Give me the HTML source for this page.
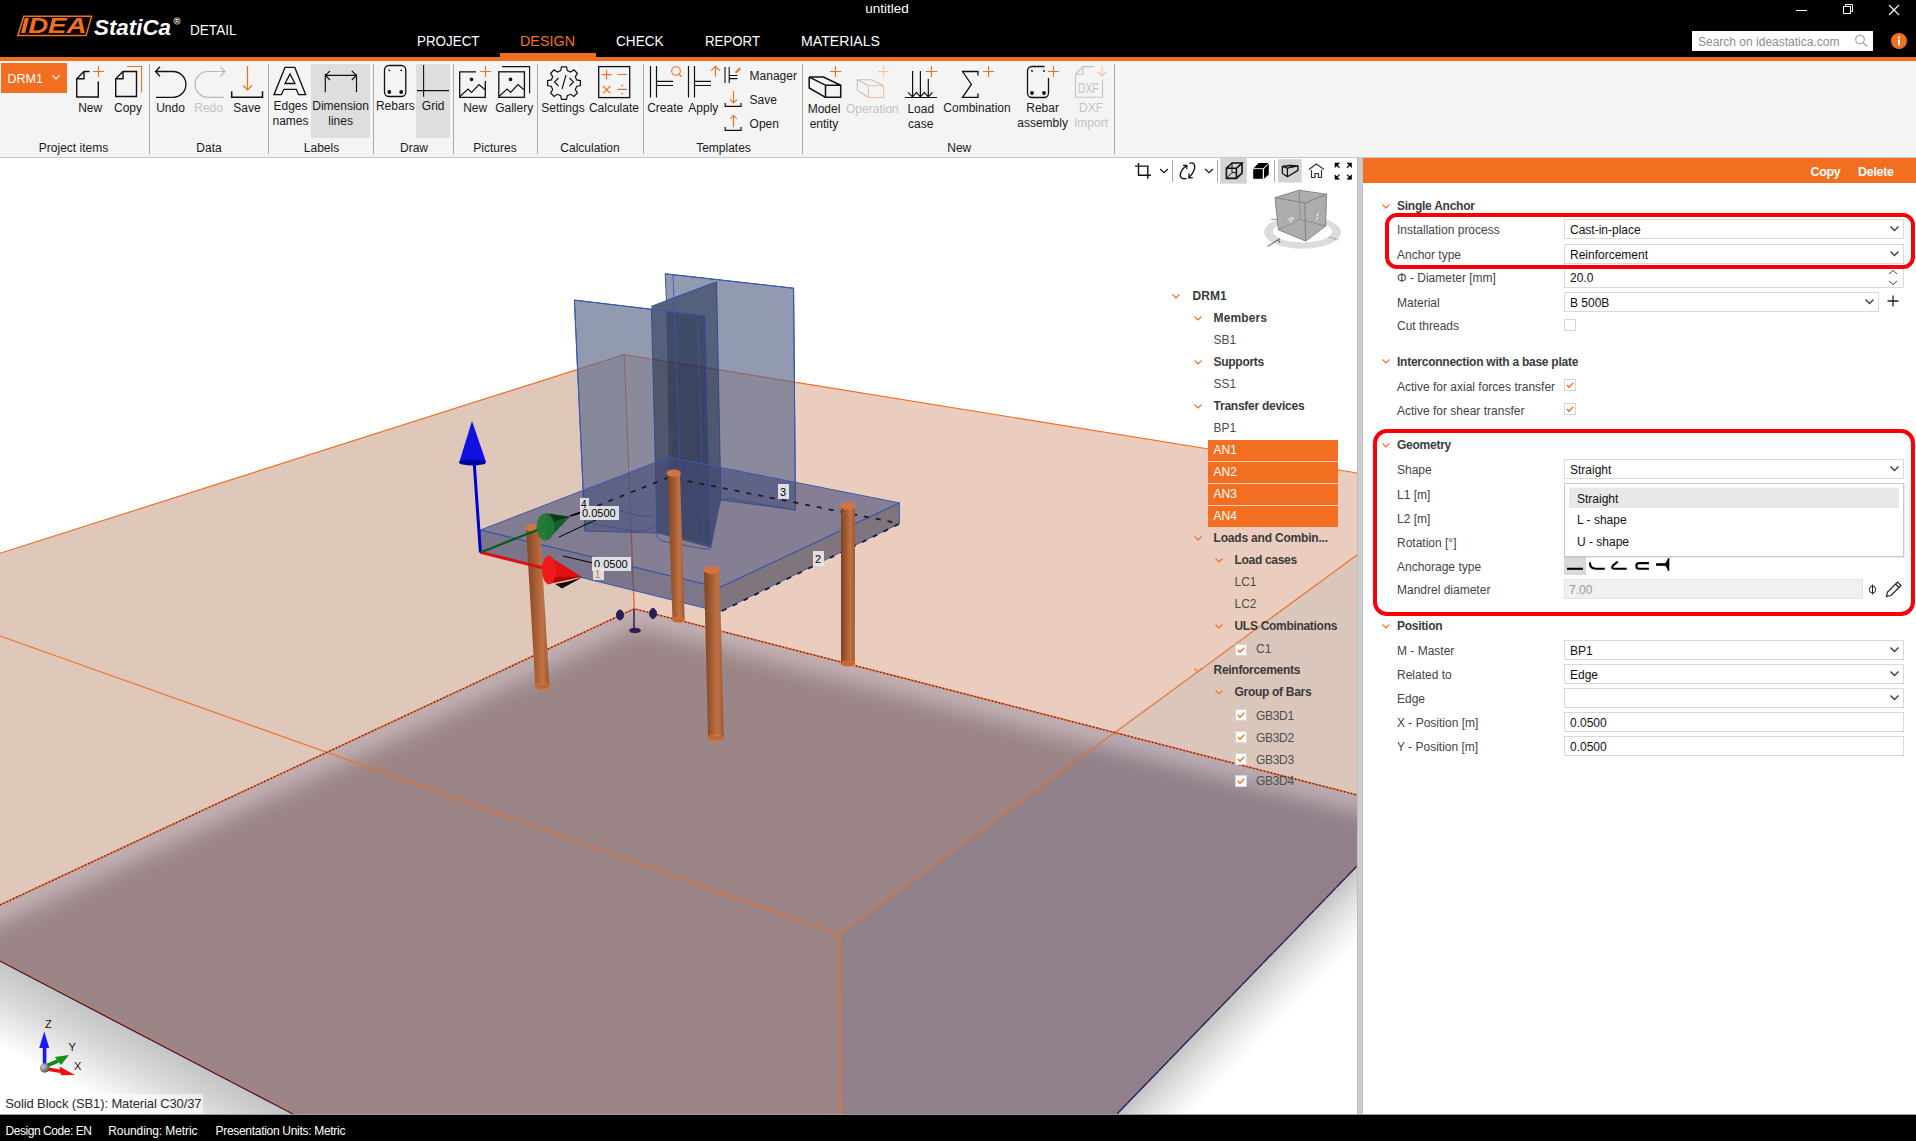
<!DOCTYPE html>
<html><head><meta charset="utf-8">
<style>
*{box-sizing:border-box;margin:0;padding:0}
html,body{width:1916px;height:1141px;overflow:hidden;background:#fff;font-family:"Liberation Sans",sans-serif;color:#262626}
.abs,.t{position:absolute}
.t{white-space:nowrap}
svg{position:absolute;overflow:visible}
</style></head>
<body>

<div class="abs" style="left:0;top:0;width:1916px;height:57px;background:#000"></div>
<div class="abs" style="left:0;top:57px;width:1916px;height:4px;background:#f26f21"></div>
<div class="abs" style="left:500px;top:53px;width:96px;height:4px;background:#f26f21"></div>
<svg style="left:0;top:0" width="260" height="57">
<polygon points="23.8,16.3 91.6,16.3 86,35.6 17.8,35.6" fill="none" stroke="#f26f21" stroke-width="1.5"/>
<text x="20.5" y="33.2" font-family="Liberation Sans" font-weight="bold" font-style="italic" font-size="21.5" fill="#f26f21" textLength="66" lengthAdjust="spacingAndGlyphs">IDEA</text>
<text x="94" y="34.5" font-family="Liberation Sans" font-weight="bold" font-style="italic" font-size="22" fill="#fff" textLength="77" lengthAdjust="spacingAndGlyphs">StatiCa</text>
<circle cx="177" cy="21" r="3.2" fill="none" stroke="#fff" stroke-width="0.7"/>
<text x="175.3" y="23" font-family="Liberation Sans" font-size="5" font-weight="bold" fill="#fff">R</text>
<text x="190" y="34.8" font-family="Liberation Sans" font-size="15" fill="#fff" textLength="46.5" lengthAdjust="spacingAndGlyphs">DETAIL</text>
</svg>
<div class="t" style="left:737.0px;width:300px;text-align:center;top:2.17px;font-size:13.5px;line-height:13.5px;color:#fff;">untitled</div>
<svg style="left:0;top:0" width="1" height="1"></svg>
<svg style="left:417px;top:30px" width="64.5" height="20"><text x="0" y="16" font-family="Liberation Sans" font-size="15" fill="#fff" textLength="62.5" lengthAdjust="spacingAndGlyphs">PROJECT</text></svg>
<svg style="left:0;top:0" width="1" height="1"></svg>
<svg style="left:520.4px;top:30px" width="57.0" height="20"><text x="0" y="16" font-family="Liberation Sans" font-size="15" fill="#f26f21" textLength="55.0" lengthAdjust="spacingAndGlyphs">DESIGN</text></svg>
<svg style="left:0;top:0" width="1" height="1"></svg>
<svg style="left:616.4px;top:30px" width="49.60000000000002" height="20"><text x="0" y="16" font-family="Liberation Sans" font-size="15" fill="#fff" textLength="47.6" lengthAdjust="spacingAndGlyphs">CHECK</text></svg>
<svg style="left:0;top:0" width="1" height="1"></svg>
<svg style="left:704.6px;top:30px" width="57.0" height="20"><text x="0" y="16" font-family="Liberation Sans" font-size="15" fill="#fff" textLength="55.0" lengthAdjust="spacingAndGlyphs">REPORT</text></svg>
<svg style="left:0;top:0" width="1" height="1"></svg>
<svg style="left:800.5px;top:30px" width="81.0" height="20"><text x="0" y="16" font-family="Liberation Sans" font-size="15" fill="#fff" textLength="79.0" lengthAdjust="spacingAndGlyphs">MATERIALS</text></svg>
<svg style="left:1780px;top:0" width="136" height="24">
<line x1="16" y1="10.5" x2="27" y2="10.5" stroke="#fff" stroke-width="1"/>
<rect x="63.5" y="6.5" width="7" height="7" fill="none" stroke="#fff" stroke-width="1"/>
<polyline points="65.5,6.5 65.5,4.5 72.5,4.5 72.5,11.5 70.5,11.5" fill="none" stroke="#fff" stroke-width="1"/>
<line x1="109" y1="5" x2="119" y2="15" stroke="#fff" stroke-width="1.1"/>
<line x1="119" y1="5" x2="109" y2="15" stroke="#fff" stroke-width="1.1"/>
</svg>
<div class="abs" style="left:1692px;top:31px;width:181px;height:20px;background:#fff"></div>
<div class="t" style="left:1698.0px;top:36.34px;font-size:12px;line-height:12px;color:#8c8c8c;">Search on ideastatica.com</div>
<svg style="left:1850px;top:31px" width="22" height="20">
<circle cx="10" cy="8.5" r="4.3" fill="none" stroke="#9a9a9a" stroke-width="1.1"/>
<line x1="13.2" y1="11.7" x2="17" y2="15.5" stroke="#9a9a9a" stroke-width="1.2"/>
</svg>
<svg style="left:1888px;top:30px" width="22" height="22">
<circle cx="11" cy="11" r="8" fill="#f26f21"/>
<rect x="10" y="9.5" width="2" height="6" fill="#fff"/>
<rect x="10" y="6.3" width="2" height="2" fill="#fff"/>
</svg>
<div class="abs" style="left:0;top:61px;width:1916px;height:96px;background:#f4f4f4"></div>
<div class="abs" style="left:0;top:157px;width:1916px;height:1px;background:#c8c8c8"></div>
<div class="abs" style="left:311px;top:64px;width:59px;height:74px;background:#dedede"></div>
<div class="abs" style="left:416px;top:64px;width:34px;height:74px;background:#dedede"></div>
<div class="abs" style="left:149.1px;top:64px;width:1px;height:90px;background:#ababab"></div>
<div class="abs" style="left:268.0px;top:64px;width:1px;height:90px;background:#ababab"></div>
<div class="abs" style="left:373.1px;top:64px;width:1px;height:90px;background:#ababab"></div>
<div class="abs" style="left:453.0px;top:64px;width:1px;height:90px;background:#ababab"></div>
<div class="abs" style="left:537.0px;top:64px;width:1px;height:90px;background:#ababab"></div>
<div class="abs" style="left:643.0px;top:64px;width:1px;height:90px;background:#ababab"></div>
<div class="abs" style="left:802.0px;top:64px;width:1px;height:90px;background:#ababab"></div>
<div class="abs" style="left:1114.0px;top:64px;width:1px;height:90px;background:#ababab"></div>
<div class="abs" style="left:1px;top:63px;width:66px;height:30px;background:#f26f21"></div>
<div class="t" style="left:7.5px;top:73.42px;font-size:12.5px;line-height:12.5px;color:#fff;">DRM1</div>
<svg style="left:50px;top:72px" width="14" height="10"><polyline points="2.5,3.5 6,7 9.5,3.5" fill="none" stroke="#fff" stroke-width="1.1"/></svg>
<div class="t" style="left:-76.5px;width:300px;text-align:center;top:141.84px;font-size:12px;line-height:12px;color:#1a1a1a;">Project items</div>
<div class="t" style="left:59.0px;width:300px;text-align:center;top:141.84px;font-size:12px;line-height:12px;color:#1a1a1a;">Data</div>
<div class="t" style="left:171.5px;width:300px;text-align:center;top:141.84px;font-size:12px;line-height:12px;color:#1a1a1a;">Labels</div>
<div class="t" style="left:264.0px;width:300px;text-align:center;top:141.84px;font-size:12px;line-height:12px;color:#1a1a1a;">Draw</div>
<div class="t" style="left:345.0px;width:300px;text-align:center;top:141.84px;font-size:12px;line-height:12px;color:#1a1a1a;">Pictures</div>
<div class="t" style="left:440.0px;width:300px;text-align:center;top:141.84px;font-size:12px;line-height:12px;color:#1a1a1a;">Calculation</div>
<div class="t" style="left:573.5px;width:300px;text-align:center;top:141.84px;font-size:12px;line-height:12px;color:#1a1a1a;">Templates</div>
<div class="t" style="left:809.3px;width:300px;text-align:center;top:141.84px;font-size:12px;line-height:12px;color:#1a1a1a;">New</div>
<div class="t" style="left:-59.8px;width:300px;text-align:center;top:102.34px;font-size:12px;line-height:12px;color:#1a1a1a;">New</div>
<div class="t" style="left:-22.0px;width:300px;text-align:center;top:102.34px;font-size:12px;line-height:12px;color:#1a1a1a;">Copy</div>
<div class="t" style="left:20.5px;width:300px;text-align:center;top:102.34px;font-size:12px;line-height:12px;color:#1a1a1a;">Undo</div>
<div class="t" style="left:58.6px;width:300px;text-align:center;top:102.34px;font-size:12px;line-height:12px;color:#c3c3c3;">Redo</div>
<div class="t" style="left:97.0px;width:300px;text-align:center;top:102.34px;font-size:12px;line-height:12px;color:#1a1a1a;">Save</div>
<div class="t" style="left:245.3px;width:300px;text-align:center;top:100.44px;font-size:12px;line-height:12px;color:#1a1a1a;">Rebars</div>
<div class="t" style="left:283.2px;width:300px;text-align:center;top:100.44px;font-size:12px;line-height:12px;color:#1a1a1a;">Grid</div>
<div class="t" style="left:325.2px;width:300px;text-align:center;top:102.44px;font-size:12px;line-height:12px;color:#1a1a1a;">New</div>
<div class="t" style="left:364.2px;width:300px;text-align:center;top:102.44px;font-size:12px;line-height:12px;color:#1a1a1a;">Gallery</div>
<div class="t" style="left:413.0px;width:300px;text-align:center;top:102.44px;font-size:12px;line-height:12px;color:#1a1a1a;">Settings</div>
<div class="t" style="left:463.9px;width:300px;text-align:center;top:102.44px;font-size:12px;line-height:12px;color:#1a1a1a;">Calculate</div>
<div class="t" style="left:515.2px;width:300px;text-align:center;top:102.34px;font-size:12px;line-height:12px;color:#1a1a1a;">Create</div>
<div class="t" style="left:553.3px;width:300px;text-align:center;top:102.34px;font-size:12px;line-height:12px;color:#1a1a1a;">Apply</div>
<div class="t" style="left:722.4px;width:300px;text-align:center;top:102.64px;font-size:12px;line-height:12px;color:#c3c3c3;">Operation</div>
<div class="t" style="left:827.0px;width:300px;text-align:center;top:102.34px;font-size:12px;line-height:12px;color:#1a1a1a;">Combination</div>
<div class="t" style="left:140.5px;width:300px;text-align:center;top:100.44px;font-size:12px;line-height:12px;color:#1a1a1a;">Edges</div>
<div class="t" style="left:140.5px;width:300px;text-align:center;top:115.44px;font-size:12px;line-height:12px;color:#1a1a1a;">names</div>
<div class="t" style="left:190.6px;width:300px;text-align:center;top:100.44px;font-size:12px;line-height:12px;color:#1a1a1a;">Dimension</div>
<div class="t" style="left:190.6px;width:300px;text-align:center;top:115.44px;font-size:12px;line-height:12px;color:#1a1a1a;">lines</div>
<div class="t" style="left:674.0px;width:300px;text-align:center;top:102.64px;font-size:12px;line-height:12px;color:#1a1a1a;">Model</div>
<div class="t" style="left:674.0px;width:300px;text-align:center;top:117.64px;font-size:12px;line-height:12px;color:#1a1a1a;">entity</div>
<div class="t" style="left:770.8px;width:300px;text-align:center;top:102.64px;font-size:12px;line-height:12px;color:#1a1a1a;">Load</div>
<div class="t" style="left:770.8px;width:300px;text-align:center;top:117.64px;font-size:12px;line-height:12px;color:#1a1a1a;">case</div>
<div class="t" style="left:892.6px;width:300px;text-align:center;top:102.34px;font-size:12px;line-height:12px;color:#1a1a1a;">Rebar</div>
<div class="t" style="left:892.6px;width:300px;text-align:center;top:117.34px;font-size:12px;line-height:12px;color:#1a1a1a;">assembly</div>
<div class="t" style="left:941.0px;width:300px;text-align:center;top:102.34px;font-size:12px;line-height:12px;color:#c3c3c3;">DXF</div>
<div class="t" style="left:941.0px;width:300px;text-align:center;top:117.34px;font-size:12px;line-height:12px;color:#c3c3c3;">Import</div>
<div class="t" style="left:749.6px;top:69.84px;font-size:12px;line-height:12px;color:#1a1a1a;">Manager</div>
<div class="t" style="left:749.6px;top:93.64px;font-size:12px;line-height:12px;color:#1a1a1a;">Save</div>
<div class="t" style="left:749.6px;top:117.54px;font-size:12px;line-height:12px;color:#1a1a1a;">Open</div>
<svg style="left:0;top:0" width="1120" height="158" fill="none" stroke="#111" stroke-width="1.4" stroke-linejoin="miter">
<!-- New doc -->
<path d="M89.5,71.5 H84 L76.7,78.8 V97 H98.3 V81.5"/>
<path d="M84,71.5 V78.8 H76.7"/>
<path d="M98.5,66 V77 M93,71.5 H104" stroke="#f26f21" stroke-width="1.1"/>
<!-- Copy doc -->
<path d="M136.5,71.5 H123 L115.7,78.8 V96.5 H136.5 Z"/>
<path d="M123,71.5 V78.8 H115.7"/>
<path d="M127,66.5 H141.6 V92.6" stroke="#f26f21" stroke-width="1.1"/>
<!-- Undo -->
<path d="M160,66.8 L155.5,71.5 L160,76.2 M155.5,71.5 H173 A12.9,12.9 0 0 1 173,97.3 H156" stroke-width="1.3"/>
<!-- Redo -->
<path d="M220.5,66.8 L225,71.5 L220.5,76.2 M225,71.5 H208 A12.9,12.9 0 0 0 208,97.3 H224" stroke="#b8b8b8" stroke-width="1.2"/>
<!-- Save -->
<path d="M231.7,91.2 V97.2 H262.5 V91.2" stroke-width="1.5"/>
<path d="M247.5,66 V90 M243,85.5 L247.5,90 L252,85.5" stroke="#f26f21" stroke-width="1.2"/>
<!-- A -->
<path d="M285,67.4 H294.8 L305.7,94.7 H298.6 L296.3,89.3 H283.8 L281.4,94.7 H274 Z" stroke-width="1.3"/>
<path d="M290,74 L295,83.5 H285 Z" stroke-width="1.3"/>
<!-- Dimension -->
<path d="M325.3,73.9 V92.2 M356.5,73.9 V92.2 M325.3,75.4 H356.5 M330,70.8 L325.5,75.4 L330,80 M351.8,70.8 L356.3,75.4 L351.8,80" stroke-width="1.2"/>
<!-- Rebars -->
<rect x="384.5" y="65.5" width="21.3" height="31" rx="4.5" stroke-width="1.3"/>
<circle cx="389.3" cy="70.3" r="0.9" fill="#111" stroke="none"/><circle cx="401.2" cy="70.3" r="0.9" fill="#111" stroke="none"/>
<circle cx="389.3" cy="92" r="1.9" fill="#111" stroke="none"/><circle cx="401.2" cy="92" r="1.9" fill="#111" stroke="none"/>
<!-- Grid -->
<path d="M423.6,65 V96.8 M417,90.6 H449" stroke-width="1.1"/>
<!-- Picture new -->
<path d="M476,71.8 H459.7 V97.3 H485.3 V81" stroke-width="1.3"/>
<path d="M459.9,96.5 L468,89 L471.6,92.5 L479,84.5 L485,89.8" stroke-width="1.2"/>
<circle cx="471.5" cy="79.4" r="1.8" fill="#111" stroke="none"/>
<path d="M485.5,66 V77 M480,71.5 H491" stroke="#f26f21" stroke-width="1.1"/>
<!-- Gallery -->
<rect x="498.8" y="71.8" width="25.6" height="25.5" stroke-width="1.3"/>
<path d="M502,66.6 H529.6 V93.5" stroke-width="1.1"/>
<path d="M499,96.5 L507,89 L510.6,92.5 L518,84.5 L524,89.8" stroke-width="1.2"/>
<circle cx="510.5" cy="79.4" r="1.8" fill="#111" stroke="none"/>
<!-- Settings gear -->
<path d="M561.5,66.8 H566.5 L567.3,70.6 L570.6,72 L573.9,69.8 L577.4,73.3 L575.3,76.6 L576.6,79.9 L580.4,80.6 V85.6 L576.6,86.4 L575.3,89.6 L577.4,92.9 L573.9,96.4 L570.6,94.3 L567.3,95.6 L566.5,99.4 H561.5 L560.7,95.6 L557.4,94.3 L554.1,96.4 L550.6,92.9 L552.7,89.6 L551.4,86.4 L547.6,85.6 V80.6 L551.4,79.9 L552.7,76.6 L550.6,73.3 L554.1,69.8 L557.4,72 L560.7,70.6 Z" stroke-width="1.2"/>
<path d="M558.5,78 L554.5,82 L558.5,86 M569.5,78 L573.5,82 L569.5,86 M566,75 L562,89" stroke-width="1.1"/>
<!-- Calculate -->
<rect x="598.7" y="66.6" width="31" height="31" stroke-width="1.3"/>
<path d="M606.6,69.8 V79.5 M601.7,74.6 H611.5 M617.5,74.5 H627 M603,86 L610.4,93.4 M610.4,86 L603,93.4 M617.5,89.4 H627" stroke="#f26f21" stroke-width="1.1"/>
<circle cx="622.2" cy="85.3" r="0.9" fill="#f26f21" stroke="none"/><circle cx="622.2" cy="93.6" r="0.9" fill="#f26f21" stroke="none"/>
<!-- Create -->
<path d="M650.5,66 V97.5 M656.5,66 V97.5 M656.5,81.3 H673 M656.5,85.5 H673" stroke-width="1.2"/>
<circle cx="676" cy="71" r="4.3" stroke="#f26f21" stroke-width="1.1"/>
<path d="M679,74 L681.7,76.8" stroke="#f26f21" stroke-width="1.2"/>
<!-- Apply -->
<path d="M688.5,66 V97.5 M694.5,66 V97.5 M694.5,81.3 H711 M694.5,85.5 H711" stroke-width="1.2"/>
<path d="M715.5,76.7 V66.3 M711,70.8 L715.5,66.3 L720,70.8" stroke="#f26f21" stroke-width="1.1"/>
<!-- Manager -->
<path d="M725,67 V83 M729.2,67 V83 M729.2,75.5 H737.4 M729.2,78.6 H737.4" stroke-width="1.1"/>
<path d="M735.5,72.8 L740.3,68.2" stroke="#f26f21" stroke-width="2.2"/>
<!-- Save small -->
<path d="M725.2,103 V106.3 H741 V103" stroke-width="1.2"/>
<path d="M733.5,91 V103 M730,99.3 L733.5,103 L737,99.3" stroke="#f26f21" stroke-width="1.1"/>
<!-- Open small -->
<path d="M725.2,127 V130.3 H741 V127" stroke-width="1.2"/>
<path d="M733.5,127.3 V115.2 M730,119 L733.5,115.2 L737,119" stroke="#f26f21" stroke-width="1.1"/>
<!-- Model entity -->
<path d="M825.5,85.2 H840.7 V97.3 H825.5 Z M809.2,77.1 H823.4 L840.7,85.2 M809.2,77.1 L825.5,85.2 M809.2,77.1 V88 L825.5,97.3" stroke-width="1.5"/>
<path d="M835.5,66 V77 M830,71.5 H841" stroke="#f26f21" stroke-width="1.1"/>
<!-- Operation disabled -->
<path d="M857.3,79.8 H871.3 L883.6,85.6 M857.3,79.8 L868.4,85.6 M857.3,79.8 V90.3 L868.4,97.5" stroke="#c0c0c0" stroke-width="1.1"/>
<rect x="868.4" y="85.6" width="15.2" height="11.9" stroke="#f6c0a0" stroke-width="1.1"/>
<path d="M883.5,66 V77 M878,71.5 H889" stroke="#f7c3a6" stroke-width="1.1"/>
<!-- Load case -->
<path d="M912.6,71 V97 M920.4,71 V97 M928.3,79 V97 M905,97.5 H937 M908.1,92.3 L912.6,96.8 L916.5,92.3 L920.4,96.8 L924.3,92.3 L928.3,96.8 L932.5,92.3" stroke-width="1.2"/>
<path d="M931.5,66 V77 M926,71.5 H937" stroke="#f26f21" stroke-width="1.1"/>
<!-- Sigma -->
<path d="M978,75.4 V71.5 H962.5 L971.4,84.4 L962.5,97.3 H978 V93.5" stroke-width="1.3"/>
<path d="M988.5,66 V77 M983,71.5 H994" stroke="#f26f21" stroke-width="1.1"/>
<!-- Rebar assembly -->
<path d="M1044.5,66.5 H1032 A4.5,4.5 0 0 0 1027.5,71 V93 A4.5,4.5 0 0 0 1032,97.5 H1044 A4.5,4.5 0 0 0 1048.5,93 V78" stroke-width="1.3"/>
<circle cx="1032" cy="71" r="0.9" fill="#111" stroke="none"/><circle cx="1044" cy="71" r="0.9" fill="#111" stroke="none"/>
<circle cx="1032" cy="93" r="1.9" fill="#111" stroke="none"/><circle cx="1044" cy="93" r="1.9" fill="#111" stroke="none"/>
<path d="M1053.5,66 V77 M1048,71.5 H1059" stroke="#f26f21" stroke-width="1.1"/>
<!-- DXF -->
<path d="M1094,66.6 H1083 L1075.5,74.3 V97.3 H1102.5 V80" stroke="#c4c4c4" stroke-width="1.1"/>
<path d="M1083,66.6 V74.3 H1075.5" stroke="#c4c4c4" stroke-width="1.1"/>
<text x="1078" y="92.5" font-family="Liberation Sans" font-size="14.5" fill="#c4c4c4" stroke="none" textLength="20.5" lengthAdjust="spacingAndGlyphs">DXF</text>
<path d="M1102,66 V76 M1098,72 L1102,76 L1106,72" stroke="#f7c3a6" stroke-width="1.1"/>
</svg>
<div class="abs" style="left:0;top:158px;width:1357px;height:957px;overflow:hidden;background:#fff">
<svg style="left:0;top:0" width="1357" height="957" viewBox="0 158 1357 957">
<defs>
<filter id="blur12" x="-10%" y="-50%" width="120%" height="200%"><feGaussianBlur stdDeviation="10"/></filter>
<clipPath id="belowDE"><polygon points="0,905 634.3,608.8 1357,795 1357,1114 0,1114"/></clipPath>
<linearGradient id="gD" gradientUnits="userSpaceOnUse" x1="317" y1="757" x2="333" y2="792"><stop offset="0" stop-color="#b9a4a7"/><stop offset="1" stop-color="#9b8587" stop-opacity="0"/></linearGradient>
<linearGradient id="gE" gradientUnits="userSpaceOnUse" x1="1000" y1="703" x2="991" y2="738"><stop offset="0" stop-color="#b0a0a8"/><stop offset="1" stop-color="#908089" stop-opacity="0"/></linearGradient>
<linearGradient id="gE1" gradientUnits="userSpaceOnUse" x1="870" y1="669" x2="861" y2="704"><stop offset="0" stop-color="#b9a4a7"/><stop offset="1" stop-color="#9b8587" stop-opacity="0"/></linearGradient>
<linearGradient id="gBL" gradientUnits="userSpaceOnUse" x1="146" y1="1037" x2="110" y2="1105"><stop offset="0" stop-color="#c4c4c4"/><stop offset="0.4" stop-color="#d8d8d8"/><stop offset="0.8" stop-color="#f2f2f2"/><stop offset="1" stop-color="#fff"/></linearGradient>
<linearGradient id="gBR" gradientUnits="userSpaceOnUse" x1="1237" y1="990" x2="1276.5" y2="1028.2"><stop offset="0" stop-color="#c4c4c4"/><stop offset="0.35" stop-color="#dedede"/><stop offset="0.75" stop-color="#f5f5f5"/><stop offset="1" stop-color="#fff"/></linearGradient>
<linearGradient id="gBLm" gradientUnits="userSpaceOnUse" x1="146" y1="1037" x2="170" y2="994"><stop offset="0" stop-color="#ad999c"/><stop offset="1" stop-color="#9b8587" stop-opacity="0"/></linearGradient>
<linearGradient id="rebar" x1="0" y1="0" x2="1" y2="0"><stop offset="0" stop-color="#7d4424"/><stop offset="0.35" stop-color="#a15a30"/><stop offset="0.7" stop-color="#c07245"/><stop offset="1" stop-color="#9c5530"/></linearGradient>
</defs>
<rect x="0" y="158" width="1357" height="956" fill="#fff"/>
<polygon points="0,553.3 624.2,354.6 634,609 0,905" fill="#dfc7b9" stroke="#dfc7b9" stroke-width="0.8"/>
<polygon points="624.2,354.6 1357,473 1357,555 1112,732 634,609" fill="#eacdbe" stroke="#eacdbe" stroke-width="0.8"/>
<polygon points="1357,555 1357,795 1112,732" fill="#dbc6bb"/>
<polygon points="0,905 634,609 1112,732 839.5,934.7 840,1114 293,1114 0,961" fill="#9b8587" stroke="#9b8587" stroke-width="1"/>
<polygon points="1112,732 1357,795 1357,866 1117,1114 840,1114 839.5,934.7" fill="#908089" stroke="#908089" stroke-width="1"/>
<g clip-path="url(#belowDE)"><polyline points="-30,919 634.3,608.8 1400,806" stroke="rgb(255,242,246)" stroke-opacity="0.4" stroke-width="34" fill="none" stroke-linejoin="round" filter="url(#blur12)"/></g>
<polygon points="0,961 293,1114 0,1114" fill="url(#gBL)"/>
<polygon points="1357,866 1357,1114 1117,1114" fill="url(#gBR)"/>
<g fill="none" stroke-width="1.15">
<polyline points="0,553.3 624.2,354.6 1357,473" stroke="#f07028"/>
<line x1="624.2" y1="354.6" x2="634.3" y2="608.8" stroke="#e06a30" stroke-width="1.3"/>
<polyline points="0,636 839.5,934.7 1357,555" stroke="#f07028"/>
<line x1="839.5" y1="934.7" x2="840.8" y2="1114" stroke="#f07028" stroke-width="1.6"/>
<polyline points="0,905 634.3,608.8 1357,795" stroke="#f07028" stroke-width="1.7"/>
<polyline points="0,905 634.3,608.8 1357,795" stroke="#22145a" stroke-width="1.2" stroke-dasharray="1.2 2.4"/>
<polyline points="0,961 293,1114" stroke="#2a1a5a" stroke-width="1.4"/>
<polyline points="0.5,960 293.5,1113" stroke="#f07028" stroke-width="1"/>
<polyline points="1357,866 1117,1114" stroke="#2a1a5a" stroke-width="1.4"/>
<polyline points="1357,866 1117,1114" stroke="#f07028" stroke-width="1" stroke-dasharray="1 14"/>
</g>
<!--COLUMN-->

<!-- column -->
<g stroke="#3a58a8" stroke-width="1" stroke-linejoin="round">
<polygon points="665.2,273.8 793.6,288.2 795.5,510 721,500 716.6,281.9 666.5,300.6" fill="rgb(95,106,142)" fill-opacity="0.68"/>
<polygon points="574.4,300.1 651.4,309.3 657,533 585,531" fill="rgb(95,106,142)" fill-opacity="0.68"/>
<polygon points="651.4,306.3 716.6,281.9 721,500 711,548 657,533" fill="rgb(42,57,91)" fill-opacity="0.8" stroke="none"/>
<polygon points="666.5,310.8 705.3,315.7 711,545 670,534" fill="rgb(20,30,60)" fill-opacity="0.33" stroke="none"/>
<polyline points="574.4,300.1 705.3,315.7 711,548" fill="none"/>
<polyline points="665.2,273.8 793.6,288.2 795.5,510" fill="none"/>
<polyline points="651.4,306.3 716.6,281.9" fill="none"/>
<line x1="574.4" y1="300.1" x2="585" y2="531" />
<line x1="673" y1="274" x2="682" y2="520" stroke-opacity="0.8"/>
<line x1="698" y1="318" x2="704" y2="545" stroke-opacity="0.8"/>
</g>
<g fill="none" stroke="#3a58a8" stroke-width="1" stroke-opacity="0.9">
<path d="M585,522 L630,530.5 Q647,533 656,525 L720,500 Q728,497 738,500 L795,510"/>
<path d="M658,532 Q655,538 662,541 L704,549 L711,549"/>
<path d="M601,506 L640,516 Q652,518 657,512 L700,494 Q705,492 712,495"/>
</g>
<!--BASEFILLET-->
<!-- plate -->
<g stroke="#3a5aae" stroke-width="1" stroke-linejoin="round">
<polygon points="480.4,530 668.9,457.3 899.4,502.9 719.3,587.7" fill="rgb(66,74,118)" fill-opacity="0.6"/>
<polygon points="480.4,530 719.3,587.7 719.3,611.7 480.4,552.4" fill="rgb(60,66,110)" fill-opacity="0.62"/>
<polygon points="719.3,587.7 899.4,502.9 899.4,523.5 719.3,611.7" fill="rgb(58,58,82)" fill-opacity="0.6"/>
</g>
<g stroke="#1a1a30" stroke-width="1.8" stroke-dasharray="5 7" fill="none">
<polyline points="575,514.7 668.9,477.3 897,523"/>
<polyline points="722,611 899,524"/>
</g>
<!-- rebars -->
<g>
<polygon points="526,528 540,528 549.5,687 535.4,687" fill="url(#rebar)"/>
<ellipse cx="542.4" cy="686.5" rx="7" ry="3" fill="#b86a3c" stroke="#f07028" stroke-width="1"/>
<ellipse cx="533" cy="528" rx="7" ry="3" fill="#c87848" stroke="#f07028" stroke-width="1.2"/>
<polygon points="667.5,473 680,473 684.7,620 672.5,620" fill="url(#rebar)"/>
<ellipse cx="678.6" cy="620" rx="6" ry="2.5" fill="#b86a3c" stroke="#f07028" stroke-width="1"/>
<ellipse cx="673.7" cy="473" rx="6.5" ry="3" fill="#c87848" stroke="#f07028" stroke-width="1.2"/>
<polygon points="841,506 855,506 854.8,664 841,664" fill="url(#rebar)"/>
<ellipse cx="847.9" cy="663.7" rx="7" ry="2.5" fill="#b86a3c" stroke="#f07028" stroke-width="1"/>
<ellipse cx="848" cy="506" rx="7" ry="3" fill="#c87848" stroke="#f07028" stroke-width="1.2"/>
<polygon points="704,570 719.5,570 723.8,738 708,738" fill="url(#rebar)"/>
<ellipse cx="716" cy="738" rx="8" ry="3" fill="#b86a3c" stroke="#f07028" stroke-width="1"/>
<ellipse cx="711.7" cy="570" rx="7.5" ry="3.2" fill="#c87848" stroke="#f07028" stroke-width="1.2"/>
</g>
<!-- support symbol -->
<g fill="#2a1e5a" stroke="#2a1e5a">
<ellipse cx="620" cy="615" rx="3.5" ry="5"/>
<ellipse cx="653" cy="613.5" rx="3.5" ry="5"/>
<line x1="634" y1="609" x2="634" y2="630" stroke-width="1.5"/>
<ellipse cx="635" cy="630.5" rx="5.5" ry="2.2"/>
</g>
<!-- gizmo -->
<g>
<line x1="480.4" y1="552.4" x2="474" y2="460" stroke="#0000d0" stroke-width="3"/>
<polygon points="472,421 459,463 486,462" fill="#1010e0"/>
<ellipse cx="472.5" cy="462.5" rx="13.5" ry="3" fill="#0000a0"/>
<line x1="480.4" y1="552.4" x2="548" y2="569" stroke="#e01010" stroke-width="3"/>
<polygon points="555,584 562,588.5 582,577.5 566,582" fill="#150808"/>
<polygon points="581.7,576.7 548,555.8 547,584.2" fill="#e41010"/>
<polygon points="581.7,576.7 550,577 547,584.2" fill="#a80808"/>
<ellipse cx="549" cy="570" rx="7" ry="14.2" fill="#f01a1a"/>
<line x1="480.4" y1="552.4" x2="545" y2="527" stroke="#0f5a1a" stroke-width="2.2"/>
<polygon points="570,516.7 545,513.5 547,540.5" fill="#155e26"/>
<polygon points="570,516.7 548,513.5 552,522" fill="#0a3a14"/>
<ellipse cx="545.5" cy="527" rx="9" ry="13.5" fill="#1f7a35" fill-opacity="0.92"/>
<line x1="570" y1="516" x2="582" y2="512" stroke="#000" stroke-width="1.5"/>
</g>
<!-- dim lines -->
<g stroke="#000" stroke-width="1" fill="none">
<line x1="559" y1="537" x2="600" y2="518"/>
<line x1="563" y1="556" x2="593" y2="563"/>
</g>
<!-- labels -->
<g font-family="Liberation Sans" font-size="11" fill="#000">
<rect x="580" y="506" width="39" height="14" fill="#e8e8ec" fill-opacity="0.92"/>
<text x="582" y="517">0.0500</text>
<rect x="580" y="498" width="9" height="10" fill="#e8e8ec" fill-opacity="0.9"/>
<text x="581" y="507.5" font-size="10">4</text>
<rect x="592" y="557" width="39" height="14" fill="#e8e8ec" fill-opacity="0.92"/>
<text x="594" y="568">0.0500</text>
<rect x="593" y="567" width="11" height="13" fill="#e8e8ec" fill-opacity="0.9"/>
<text x="595" y="578" font-size="10" fill="#f07028">1</text>
<rect x="778" y="484" width="11" height="15" fill="#e8e8ec" fill-opacity="0.92"/>
<text x="780" y="496" font-size="11">3</text>
<rect x="813" y="551" width="11" height="15" fill="#e8e8ec" fill-opacity="0.92"/>
<text x="815" y="563" font-size="11">2</text>
</g>

</svg>
</div>
<svg style="left:1120px;top:158px" width="237" height="30" fill="none" stroke="#111" stroke-width="1.3">
<rect x="100.2" y="0" width="26.6" height="25.7" fill="#d3d3d3" stroke="none"/>
<rect x="158" y="1.2" width="23.7" height="23.4" fill="#d3d3d3" stroke="none"/>
<path d="M18.5,5 V17.2 H31 M15,8.1 H27.8 V20.7" stroke-width="1.4"/>
<polyline points="40.2,11 44,14.7 47.9,11" stroke-width="1.1"/>
<line x1="52.5" y1="2" x2="52.5" y2="24" stroke="#a8a8a8" stroke-width="1"/>
<path d="M66.7,7.6 C61,11 59,17 61,19.5 C62.5,21 65,20.8 66.5,20.3" stroke-width="1.3"/>
<path d="M63,7.3 L66.8,7.3 L66.8,11" stroke-width="1.3"/>
<path d="M68.5,19.8 C74,15 76,9 74,6 C73,4.6 71,4.8 69.5,5.3" stroke-width="1.3"/>
<path d="M69,15.5 V19.8 H72.8" stroke-width="1.3"/>
<polyline points="85.2,11 89,14.7 92.9,11" stroke-width="1.1"/>
<line x1="97.5" y1="2" x2="97.5" y2="24" stroke="#a8a8a8" stroke-width="1"/>
<path d="M106.4,10.3 H116.4 V20.4 H106.4 Z M106.4,10.3 L112,5 H122 L116.4,10.3 M122,5 V15.2 L116.4,20.4" stroke-width="1.6"/>
<path d="M112,5.5 V14.6 L106.8,20 M112,14.6 H115.8" stroke-width="1"/>
<path d="M133.2,11.1 H142.8 V20.8 H133.2 Z" fill="#000" stroke="none"/>
<path d="M133.6,10.3 L138.6,5 H148.6 L143.4,10.3 Z" fill="#000" stroke="none"/>
<path d="M144,11 L148.8,5.8 V16.5 L144,20.8 Z" fill="#000" stroke="none"/>
<line x1="154.5" y1="2" x2="154.5" y2="24" stroke="#a8a8a8" stroke-width="1"/>
<path d="M162.4,8.5 L170,7.5 L177.9,7.9 V12.3 L167.4,18.7 L162.4,15.5 Z M162.4,8.5 L167.4,10.2 L177.9,7.9 M167.4,10.2 V18.7" stroke-width="1.3"/>
<path d="M189,11.4 L196.3,6.1 L204,11.4 M191.5,12 V19.5 H195 V15.5 H198.5 V19.5 H201.5 V12" stroke="#333" stroke-width="1.2"/>
<path d="M215.5,5.5 L219.5,9.7 M231,5.5 L227,9.7 M215.5,20.8 L219.5,16.6 M231,20.8 L227,16.6" stroke-width="1.3"/>
<path d="M215,5 H219.5 L215,9.5 Z M231.5,5 H227 L231.5,9.5 Z M215,21.3 H219.5 L215,16.8 Z M231.5,21.3 H227 L231.5,16.8 Z" fill="#000" stroke="#000" stroke-width="0.6"/>
</svg>
<svg style="left:1260px;top:186px" width="90" height="68">
<ellipse cx="42.5" cy="46.3" rx="38.5" ry="16.5" fill="#dcdcdc"/>
<ellipse cx="42.5" cy="45.5" rx="29.6" ry="10.9" fill="#fff"/>
<polygon points="39.3,4.2 66.6,8.2 65.6,40.1 45.7,55.1 18.4,43.8 15,11.6" fill="#adadad" stroke="#7d7d7d" stroke-width="0.9"/>
<polyline points="15,11.6 44.8,17.1 66.6,8.2" fill="none" stroke="#7d7d7d" stroke-width="0.9"/>
<line x1="44.8" y1="17.1" x2="45.7" y2="55.1" stroke="#7d7d7d" stroke-width="0.9"/>
<polyline points="39.3,4.2 40.2,33.4 18.4,43.8" fill="none" stroke="#858585" stroke-width="0.8"/>
<line x1="40.2" y1="33.4" x2="65.6" y2="40.1" stroke="#858585" stroke-width="0.8"/>
<path d="M27.5,34 L29.5,33 M31,31 V37 M32,31 L34,34" stroke="#fff" stroke-width="0.9"/>
<path d="M57,30 L58.5,27 M56,34 L58,31" stroke="#fff" stroke-width="0.9"/>
<line x1="11" y1="33.3" x2="18" y2="33.3" stroke="#777" stroke-width="0.8"/>
<path d="M7.5,60.5 L20,52.5 M14,56 L18.5,54 L20,57" stroke="#6f6f6f" stroke-width="1.1" fill="none"/>
<path d="M69,51 L78,54" stroke="#777" stroke-width="1" stroke-dasharray="1.6 1.2"/>
</svg>
<svg style="left:1171px;top:292.5px" width="12" height="8"><polyline points="1.5,1.5 5,5 8.5,1.5" fill="none" stroke="#f26f21" stroke-width="1.1"/></svg>
<div class="t" style="left:1192.6px;top:289.84px;font-size:12px;line-height:12px;color:#3a3a3a;font-weight:bold;">DRM1</div>
<svg style="left:1192.5px;top:314.5px" width="12" height="8"><polyline points="1.5,1.5 5,5 8.5,1.5" fill="none" stroke="#f26f21" stroke-width="1.1"/></svg>
<div class="t" style="left:1213.6px;top:311.84px;font-size:12px;line-height:12px;color:#3a3a3a;font-weight:bold;letter-spacing:0.1px">Members</div>
<div class="t" style="left:1213.6px;top:333.84px;font-size:12px;line-height:12px;color:#4d4d4d;">SB1</div>
<svg style="left:1192.5px;top:358.6px" width="12" height="8"><polyline points="1.5,1.5 5,5 8.5,1.5" fill="none" stroke="#f26f21" stroke-width="1.1"/></svg>
<div class="t" style="left:1213.6px;top:355.94px;font-size:12px;line-height:12px;color:#3a3a3a;font-weight:bold;letter-spacing:-0.3px">Supports</div>
<div class="t" style="left:1213.6px;top:377.74px;font-size:12px;line-height:12px;color:#4d4d4d;">SS1</div>
<svg style="left:1192.5px;top:402.5px" width="12" height="8"><polyline points="1.5,1.5 5,5 8.5,1.5" fill="none" stroke="#f26f21" stroke-width="1.1"/></svg>
<div class="t" style="left:1213.6px;top:399.84px;font-size:12px;line-height:12px;color:#3a3a3a;font-weight:bold;letter-spacing:-0.25px">Transfer devices</div>
<div class="t" style="left:1213.6px;top:421.84px;font-size:12px;line-height:12px;color:#4d4d4d;">BP1</div>
<div class="abs" style="left:1208px;top:440px;width:130px;height:21px;background:#f26f21"></div>
<div class="t" style="left:1213.6px;top:443.84px;font-size:12px;line-height:12px;color:#fff;">AN1</div>
<div class="abs" style="left:1208px;top:462px;width:130px;height:21px;background:#f26f21"></div>
<div class="t" style="left:1213.6px;top:465.84px;font-size:12px;line-height:12px;color:#fff;">AN2</div>
<div class="abs" style="left:1208px;top:484px;width:130px;height:21px;background:#f26f21"></div>
<div class="t" style="left:1213.6px;top:487.84px;font-size:12px;line-height:12px;color:#fff;">AN3</div>
<div class="abs" style="left:1208px;top:506px;width:130px;height:21px;background:#f26f21"></div>
<div class="t" style="left:1213.6px;top:509.84px;font-size:12px;line-height:12px;color:#fff;">AN4</div>
<div class="abs" style="left:1208px;top:461px;width:130px;height:1px;background:#f3c7ac"></div>
<svg style="left:1192.5px;top:534.5px" width="12" height="8"><polyline points="1.5,1.5 5,5 8.5,1.5" fill="none" stroke="#f26f21" stroke-width="1.1"/></svg>
<div class="t" style="left:1213.6px;top:531.84px;font-size:12px;line-height:12px;color:#3a3a3a;font-weight:bold;letter-spacing:-0.2px">Loads and Combin...</div>
<svg style="left:1213.5px;top:556.5px" width="12" height="8"><polyline points="1.5,1.5 5,5 8.5,1.5" fill="none" stroke="#f26f21" stroke-width="1.1"/></svg>
<div class="t" style="left:1234.5px;top:553.84px;font-size:12px;line-height:12px;color:#3a3a3a;font-weight:bold;letter-spacing:-0.3px">Load cases</div>
<div class="t" style="left:1234.5px;top:575.84px;font-size:12px;line-height:12px;color:#4d4d4d;">LC1</div>
<div class="t" style="left:1234.5px;top:597.84px;font-size:12px;line-height:12px;color:#4d4d4d;">LC2</div>
<svg style="left:1213.5px;top:622.5px" width="12" height="8"><polyline points="1.5,1.5 5,5 8.5,1.5" fill="none" stroke="#f26f21" stroke-width="1.1"/></svg>
<div class="t" style="left:1234.5px;top:619.84px;font-size:12px;line-height:12px;color:#3a3a3a;font-weight:bold;letter-spacing:-0.3px">ULS Combinations</div>
<div class="abs" style="left:1234.5px;top:643.5px;width:12px;height:12px;background:#fff;border:1px solid #d6d6d6"></div>
<svg style="left:1234.5px;top:643.5px" width="12" height="12"><polyline points="2.8,6 5,8.3 9.3,3.6" fill="none" stroke="#f26f21" stroke-width="1.4"/></svg>
<div class="t" style="left:1256.0px;top:643.34px;font-size:12px;line-height:12px;color:#4d4d4d;">C1</div>
<svg style="left:1192.5px;top:666.7px" width="12" height="8"><polyline points="1.5,1.5 5,5 8.5,1.5" fill="none" stroke="#f26f21" stroke-width="1.1"/></svg>
<div class="t" style="left:1213.6px;top:664.04px;font-size:12px;line-height:12px;color:#3a3a3a;font-weight:bold;letter-spacing:-0.3px">Reinforcements</div>
<svg style="left:1213.5px;top:688.7px" width="12" height="8"><polyline points="1.5,1.5 5,5 8.5,1.5" fill="none" stroke="#f26f21" stroke-width="1.1"/></svg>
<div class="t" style="left:1234.5px;top:686.04px;font-size:12px;line-height:12px;color:#3a3a3a;font-weight:bold;letter-spacing:-0.3px">Group of Bars</div>
<div class="abs" style="left:1234.5px;top:709.0px;width:12px;height:12px;background:#fff;border:1px solid #d6d6d6"></div>
<svg style="left:1234.5px;top:709.0px" width="12" height="12"><polyline points="2.8,6 5,8.3 9.3,3.6" fill="none" stroke="#f26f21" stroke-width="1.4"/></svg>
<div class="t" style="left:1256.0px;top:709.84px;font-size:12px;line-height:12px;color:#4d4d4d;letter-spacing:-0.3px">GB3D1</div>
<div class="abs" style="left:1234.5px;top:730.85px;width:12px;height:12px;background:#fff;border:1px solid #d6d6d6"></div>
<svg style="left:1234.5px;top:730.85px" width="12" height="12"><polyline points="2.8,6 5,8.3 9.3,3.6" fill="none" stroke="#f26f21" stroke-width="1.4"/></svg>
<div class="t" style="left:1256.0px;top:731.69px;font-size:12px;line-height:12px;color:#4d4d4d;letter-spacing:-0.3px">GB3D2</div>
<div class="abs" style="left:1234.5px;top:752.7px;width:12px;height:12px;background:#fff;border:1px solid #d6d6d6"></div>
<svg style="left:1234.5px;top:752.7px" width="12" height="12"><polyline points="2.8,6 5,8.3 9.3,3.6" fill="none" stroke="#f26f21" stroke-width="1.4"/></svg>
<div class="t" style="left:1256.0px;top:753.54px;font-size:12px;line-height:12px;color:#4d4d4d;letter-spacing:-0.3px">GB3D3</div>
<div class="abs" style="left:1234.5px;top:774.55px;width:12px;height:12px;background:#fff;border:1px solid #d6d6d6"></div>
<svg style="left:1234.5px;top:774.55px" width="12" height="12"><polyline points="2.8,6 5,8.3 9.3,3.6" fill="none" stroke="#f26f21" stroke-width="1.4"/></svg>
<div class="t" style="left:1256.0px;top:775.39px;font-size:12px;line-height:12px;color:#4d4d4d;letter-spacing:-0.3px">GB3D4</div>
<svg style="left:0px;top:1010px" width="90" height="75">
<defs><radialGradient id="sph" cx="0.35" cy="0.35" r="0.7"><stop offset="0" stop-color="#d0d0d0"/><stop offset="1" stop-color="#505050"/></radialGradient></defs>
<text x="45" y="18" font-family="Liberation Sans" font-size="11" fill="#111">Z</text>
<text x="68.5" y="40.5" font-family="Liberation Sans" font-size="11" fill="#111">Y</text>
<text x="74" y="60" font-family="Liberation Sans" font-size="11" fill="#111">X</text>
<line x1="44.6" y1="56" x2="44.6" y2="37" stroke="#1a1aff" stroke-width="3.6"/>
<polygon points="44.3,21.5 39.2,38 49.2,38" fill="#1a1aff"/>
<line x1="46" y1="56" x2="58" y2="51" stroke="#10880f" stroke-width="3.6"/>
<polygon points="69,45 54.8,47 61,55" fill="#16901a"/>
<line x1="47" y1="59" x2="62" y2="61.5" stroke="#ee1111" stroke-width="3.6"/>
<polygon points="75,65 59.5,56.6 61,65.2" fill="#ee1111"/>
<circle cx="44.6" cy="58" r="4.7" fill="url(#sph)"/>
</svg>
<div class="abs" style="left:0;top:1094px;width:203px;height:20px;background:rgba(255,255,255,0.55)"></div>
<div class="t" style="left:5.3px;top:1097.30px;font-size:13px;line-height:13px;color:#2a2a2a;letter-spacing:-0.12px">Solid Block (SB1): Material C30/37</div>
<div class="abs" style="left:1357px;top:158px;width:6px;height:957px;background:#cdcdcd;border-left:1px solid #bcbcbc;border-right:1px solid #c2c2c2"></div>
<div class="abs" style="left:1363px;top:158px;width:553px;height:957px;background:#fff"></div>
<div class="abs" style="left:1363px;top:158px;width:553px;height:25px;background:#f26f21"></div>
<div class="t" style="left:1810.6px;top:165.92px;font-size:12.5px;line-height:12.5px;color:#fff;font-weight:bold;letter-spacing:-0.4px">Copy</div>
<div class="t" style="left:1858.0px;top:165.92px;font-size:12.5px;line-height:12.5px;color:#fff;font-weight:bold;letter-spacing:-0.3px">Delete</div>
<svg style="left:1380.5px;top:202.6px" width="12" height="8"><polyline points="1.5,1.5 5,5 8.5,1.5" fill="none" stroke="#f26f21" stroke-width="1.1"/></svg>
<div class="t" style="left:1397.0px;top:199.94px;font-size:12px;line-height:12px;color:#3c3c3c;font-weight:bold;letter-spacing:-0.25px">Single Anchor</div>
<div class="t" style="left:1397.0px;top:224.24px;font-size:12px;line-height:12px;color:#444;">Installation process</div>
<div class="abs" style="left:1564px;top:219.0px;width:340px;height:20px;background:#fff;border:1px solid #d9d9d9"></div>
<div class="t" style="left:1570.0px;top:224.24px;font-size:12px;line-height:12px;color:#111;">Cast-in-place</div>
<svg style="left:1888.5px;top:224.0px" width="12" height="10"><polyline points="1.5,2.5 5.5,6.5 9.5,2.5" fill="none" stroke="#3a3a3a" stroke-width="1.3"/></svg>
<div class="t" style="left:1397.0px;top:248.54px;font-size:12px;line-height:12px;color:#444;">Anchor type</div>
<div class="abs" style="left:1564px;top:244.0px;width:340px;height:20px;background:#fff;border:1px solid #d9d9d9"></div>
<div class="t" style="left:1570.0px;top:248.54px;font-size:12px;line-height:12px;color:#111;">Reinforcement</div>
<svg style="left:1888.5px;top:249.0px" width="12" height="10"><polyline points="1.5,2.5 5.5,6.5 9.5,2.5" fill="none" stroke="#3a3a3a" stroke-width="1.3"/></svg>
<div class="t" style="left:1397.0px;top:272.44px;font-size:12px;line-height:12px;color:#444;">Φ - Diameter [mm]</div>
<div class="abs" style="left:1564px;top:268.0px;width:340px;height:20px;background:#fff;border:1px solid #d9d9d9"></div>
<div class="t" style="left:1570.0px;top:272.44px;font-size:12px;line-height:12px;color:#111;">20.0</div>
<svg style="left:1886px;top:268px" width="14" height="20"><polyline points="3,6 7,2.5 11,6" fill="none" stroke="#444" stroke-width="1"/><polyline points="3,13 7,16.5 11,13" fill="none" stroke="#444" stroke-width="1"/></svg>
<div class="t" style="left:1397.0px;top:296.54px;font-size:12px;line-height:12px;color:#444;">Material</div>
<div class="abs" style="left:1564px;top:292.0px;width:315px;height:20px;background:#fff;border:1px solid #d9d9d9"></div>
<div class="t" style="left:1570.0px;top:296.54px;font-size:12px;line-height:12px;color:#111;">B 500B</div>
<svg style="left:1863.5px;top:297.0px" width="12" height="10"><polyline points="1.5,2.5 5.5,6.5 9.5,2.5" fill="none" stroke="#3a3a3a" stroke-width="1.3"/></svg>
<svg style="left:1886px;top:294px" width="14" height="14"><path d="M7,1.5 V12.5 M1.5,7 H12.5" stroke="#222" stroke-width="1.3"/></svg>
<div class="t" style="left:1397.0px;top:320.44px;font-size:12px;line-height:12px;color:#444;">Cut threads</div>
<div class="abs" style="left:1564px;top:319px;width:12px;height:12px;background:#fff;border:1px solid #d6d6d6"></div>
<svg style="left:1380.5px;top:358.2px" width="12" height="8"><polyline points="1.5,1.5 5,5 8.5,1.5" fill="none" stroke="#f26f21" stroke-width="1.1"/></svg>
<div class="t" style="left:1397.0px;top:355.54px;font-size:12px;line-height:12px;color:#3c3c3c;font-weight:bold;letter-spacing:-0.25px">Interconnection with a base plate</div>
<div class="t" style="left:1397.0px;top:380.74px;font-size:12px;line-height:12px;color:#444;">Active for axial forces transfer</div>
<div class="abs" style="left:1564px;top:379px;width:12px;height:12px;background:#fff;border:1px solid #d6d6d6"></div>
<svg style="left:1564px;top:379px" width="12" height="12"><polyline points="2.8,6 5,8.3 9.3,3.6" fill="none" stroke="#f26f21" stroke-width="1.4"/></svg>
<div class="t" style="left:1397.0px;top:405.14px;font-size:12px;line-height:12px;color:#444;">Active for shear transfer</div>
<div class="abs" style="left:1564px;top:403px;width:12px;height:12px;background:#fff;border:1px solid #d6d6d6"></div>
<svg style="left:1564px;top:403px" width="12" height="12"><polyline points="2.8,6 5,8.3 9.3,3.6" fill="none" stroke="#f26f21" stroke-width="1.4"/></svg>
<svg style="left:1380.5px;top:441.9px" width="12" height="8"><polyline points="1.5,1.5 5,5 8.5,1.5" fill="none" stroke="#f26f21" stroke-width="1.1"/></svg>
<div class="t" style="left:1397.0px;top:439.24px;font-size:12px;line-height:12px;color:#3c3c3c;font-weight:bold;letter-spacing:-0.25px">Geometry</div>
<div class="t" style="left:1397.0px;top:464.24px;font-size:12px;line-height:12px;color:#444;">Shape</div>
<div class="abs" style="left:1564px;top:459.0px;width:340px;height:20px;background:#fff;border:1px solid #d9d9d9"></div>
<div class="t" style="left:1570.0px;top:464.24px;font-size:12px;line-height:12px;color:#111;">Straight</div>
<svg style="left:1888.5px;top:464.0px" width="12" height="10"><polyline points="1.5,2.5 5.5,6.5 9.5,2.5" fill="none" stroke="#3a3a3a" stroke-width="1.3"/></svg>
<div class="t" style="left:1397.0px;top:489.24px;font-size:12px;line-height:12px;color:#444;">L1 [m]</div>
<div class="t" style="left:1397.0px;top:512.84px;font-size:12px;line-height:12px;color:#444;">L2 [m]</div>
<div class="t" style="left:1397.0px;top:536.54px;font-size:12px;line-height:12px;color:#444;">Rotation [°]</div>
<div class="t" style="left:1397.0px;top:560.84px;font-size:12px;line-height:12px;color:#444;">Anchorage type</div>
<div class="t" style="left:1397.0px;top:584.14px;font-size:12px;line-height:12px;color:#444;">Mandrel diameter</div>
<div class="abs" style="left:1564px;top:579.0px;width:299px;height:20px;background:#f0f0f0;border:1px solid #e3e3e3"></div>
<div class="t" style="left:1569.0px;top:584.14px;font-size:12px;line-height:12px;color:#9a9a9a;">7.00</div>
<svg style="left:1864px;top:580px" width="45" height="20">
<ellipse cx="8.5" cy="9.5" rx="3.2" ry="3.6" fill="none" stroke="#222" stroke-width="1"/><line x1="8.5" y1="4.5" x2="8.5" y2="14.5" stroke="#222" stroke-width="1"/>
<path d="M22.5,16.5 L23.5,12 L33.5,2 L37,5.5 L27,15.5 Z M31.5,4 L35,7.5" fill="none" stroke="#222" stroke-width="1.2"/>
</svg>
<div class="abs" style="left:1564px;top:557px;width:21.5px;height:17.5px;background:#d9d9d9"></div>
<svg style="left:1564px;top:557px" width="110" height="18" fill="none" stroke="#000" stroke-width="2.1">
<path d="M3,11.8 H19"/>
<path d="M25.9,5.6 Q25.9,11.8 31.8,11.8 H40.8"/>
<path d="M53.8,4.6 L49.3,8.2 Q46.5,11.8 51.2,11.8 H62.7"/>
<path d="M84.9,6.1 H75.3 Q72.3,6.1 72.3,9 Q72.3,11.8 75.3,11.8 H84.9"/>
<path d="M92.1,7.5 H102.5" stroke-width="2.6"/>
<polygon points="100.5,7.5 104.5,1.2 104.5,13.8" fill="#000" stroke="none"/>
<line x1="104.5" y1="1.2" x2="104.5" y2="13.8" stroke-width="1.6"/>
</svg>
<svg style="left:1380.5px;top:623.0px" width="12" height="8"><polyline points="1.5,1.5 5,5 8.5,1.5" fill="none" stroke="#f26f21" stroke-width="1.1"/></svg>
<div class="t" style="left:1397.0px;top:620.34px;font-size:12px;line-height:12px;color:#3c3c3c;font-weight:bold;letter-spacing:-0.25px">Position</div>
<div class="t" style="left:1397.0px;top:644.54px;font-size:12px;line-height:12px;color:#444;">M - Master</div>
<div class="abs" style="left:1564px;top:640.0px;width:340px;height:20px;background:#fff;border:1px solid #d9d9d9"></div>
<div class="t" style="left:1570.0px;top:644.54px;font-size:12px;line-height:12px;color:#111;">BP1</div>
<svg style="left:1888.5px;top:645.0px" width="12" height="10"><polyline points="1.5,2.5 5.5,6.5 9.5,2.5" fill="none" stroke="#3a3a3a" stroke-width="1.3"/></svg>
<div class="t" style="left:1397.0px;top:668.54px;font-size:12px;line-height:12px;color:#444;">Related to</div>
<div class="abs" style="left:1564px;top:664.0px;width:340px;height:20px;background:#fff;border:1px solid #d9d9d9"></div>
<div class="t" style="left:1570.0px;top:668.54px;font-size:12px;line-height:12px;color:#111;">Edge</div>
<svg style="left:1888.5px;top:669.0px" width="12" height="10"><polyline points="1.5,2.5 5.5,6.5 9.5,2.5" fill="none" stroke="#3a3a3a" stroke-width="1.3"/></svg>
<div class="t" style="left:1397.0px;top:692.54px;font-size:12px;line-height:12px;color:#444;">Edge</div>
<div class="abs" style="left:1564px;top:688.0px;width:340px;height:20px;background:#fff;border:1px solid #d9d9d9"></div>
<svg style="left:1888.5px;top:693.0px" width="12" height="10"><polyline points="1.5,2.5 5.5,6.5 9.5,2.5" fill="none" stroke="#3a3a3a" stroke-width="1.3"/></svg>
<div class="t" style="left:1397.0px;top:716.54px;font-size:12px;line-height:12px;color:#444;">X - Position [m]</div>
<div class="abs" style="left:1564px;top:712.0px;width:340px;height:20px;background:#fff;border:1px solid #d9d9d9"></div>
<div class="t" style="left:1570.0px;top:716.54px;font-size:12px;line-height:12px;color:#111;">0.0500</div>
<div class="t" style="left:1397.0px;top:740.54px;font-size:12px;line-height:12px;color:#444;">Y - Position [m]</div>
<div class="abs" style="left:1564px;top:736.0px;width:340px;height:20px;background:#fff;border:1px solid #d9d9d9"></div>
<div class="t" style="left:1570.0px;top:740.54px;font-size:12px;line-height:12px;color:#111;">0.0500</div>
<div class="abs" style="left:1564px;top:483px;width:340px;height:74px;background:#fff;border:1px solid #c9c9c9;box-shadow:1px 1px 1px rgba(0,0,0,0.08)"></div>
<div class="abs" style="left:1569px;top:488px;width:330px;height:19.5px;background:#e8e8e8"></div>
<div class="t" style="left:1577.0px;top:492.54px;font-size:12px;line-height:12px;color:#111;">Straight</div>
<div class="t" style="left:1577.0px;top:514.24px;font-size:12px;line-height:12px;color:#111;">L - shape</div>
<div class="t" style="left:1577.0px;top:535.84px;font-size:12px;line-height:12px;color:#111;">U - shape</div>
<div class="abs" style="left:1385px;top:213px;width:530px;height:56px;border:4px solid #fc0008;border-radius:12px"></div>
<div class="abs" style="left:1373px;top:429px;width:542px;height:187px;border:4px solid #fc0008;border-radius:14px"></div>
<div class="abs" style="left:0;top:1114px;width:1916px;height:1px;background:#9a9a9a"></div>
<div class="abs" style="left:0;top:1115px;width:1916px;height:26px;background:#000"></div>
<div class="t" style="left:5.5px;top:1125.34px;font-size:12px;line-height:12px;color:#fff;letter-spacing:-0.45px">Design Code: EN</div>
<div class="t" style="left:108.3px;top:1125.34px;font-size:12px;line-height:12px;color:#fff;letter-spacing:-0.1px">Rounding: Metric</div>
<div class="t" style="left:215.5px;top:1125.34px;font-size:12px;line-height:12px;color:#fff;letter-spacing:-0.3px">Presentation Units: Metric</div>
</body></html>
